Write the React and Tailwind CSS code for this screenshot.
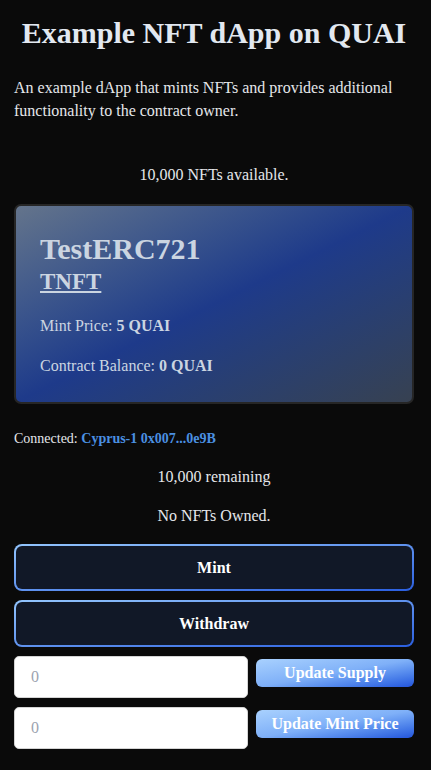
import React from "react";

function OutlineButton({ children }) {
  return (
    <button className="w-full h-[47px] rounded-[8px] border-2 border-transparent text-white font-bold text-[16px] [background:linear-gradient(#111827,#111827)_padding-box,linear-gradient(to_bottom_right,#93c5fd,#2b5fe0)_border-box]">
      {children}
    </button>
  );
}

function UpdateRow({ label }) {
  return (
    <div className="flex items-start gap-2">
      <input
        type="text"
        placeholder="0"
        className="w-[234px] h-[42px] bg-white rounded-[5px] border border-[#d4d4d4] px-4 text-[16px] placeholder:text-[#9ca3af] outline-none"
      />
      <button className="flex-1 mt-[3px] h-[28px] rounded-[6px] text-white font-bold text-[16px] bg-gradient-to-br from-[#a9d1fe] via-[#7fb0f8] to-[#2454dc]">
        {label}
      </button>
    </div>
  );
}

export default function App() {
  return (
    <div className="min-h-[770px] bg-[#0a0a0a] text-[#e5e7eb] font-['Liberation_Serif',serif]">
      <div className="w-[400px] ml-[14px]">
        <h1 className="pt-[13px] text-center text-[30px] font-bold leading-[40px] text-[#e2e8f0]">
          Example NFT dApp on QUAI
        </h1>
        <p className="mt-[23px] text-[16px] leading-[23px] text-[#e5e7eb]">
          An example dApp that mints NFTs and provides additional functionality to the contract owner.
        </p>
        <p className="mt-[41px] text-center text-[16px] leading-[24px]">10,000 NFTs available.</p>

        <div className="mt-[17px] h-[200px] rounded-[7px] border-2 border-[#262626] bg-gradient-to-br from-[#64748b] via-[#1e3a8a] to-[#374151] px-[24px] pt-[24px] text-[#cbd5e1]">
          <h2 className="text-[30px] font-bold leading-[38px]">TestERC721</h2>
          <h3 className="text-[23px] font-bold leading-[28px] underline">TNFT</h3>
          <p className="mt-[18px] text-[16px] leading-[24px]">
            Mint Price: <span className="font-bold">5 QUAI</span>
          </p>
          <p className="mt-[16px] text-[16px] leading-[24px]">
            Contract Balance: <span className="font-bold">0 QUAI</span>
          </p>
        </div>

        <p className="mt-[25px] text-[14px] leading-[20px]">
          Connected: <span className="font-bold text-[#4a90e2]">Cyprus-1 0x007...0e9B</span>
        </p>
        <p className="mt-[16px] text-center text-[16px] leading-[24px]">10,000 remaining</p>
        <p className="mt-[15px] text-center text-[16px] leading-[24px]">No NFTs Owned.</p>

        <div className="mt-[16px] flex flex-col gap-[9px]">
          <OutlineButton>Mint</OutlineButton>
          <OutlineButton>Withdraw</OutlineButton>
          <UpdateRow label="Update Supply" />
          <UpdateRow label="Update Mint Price" />
        </div>
      </div>
    </div>
  );
}
